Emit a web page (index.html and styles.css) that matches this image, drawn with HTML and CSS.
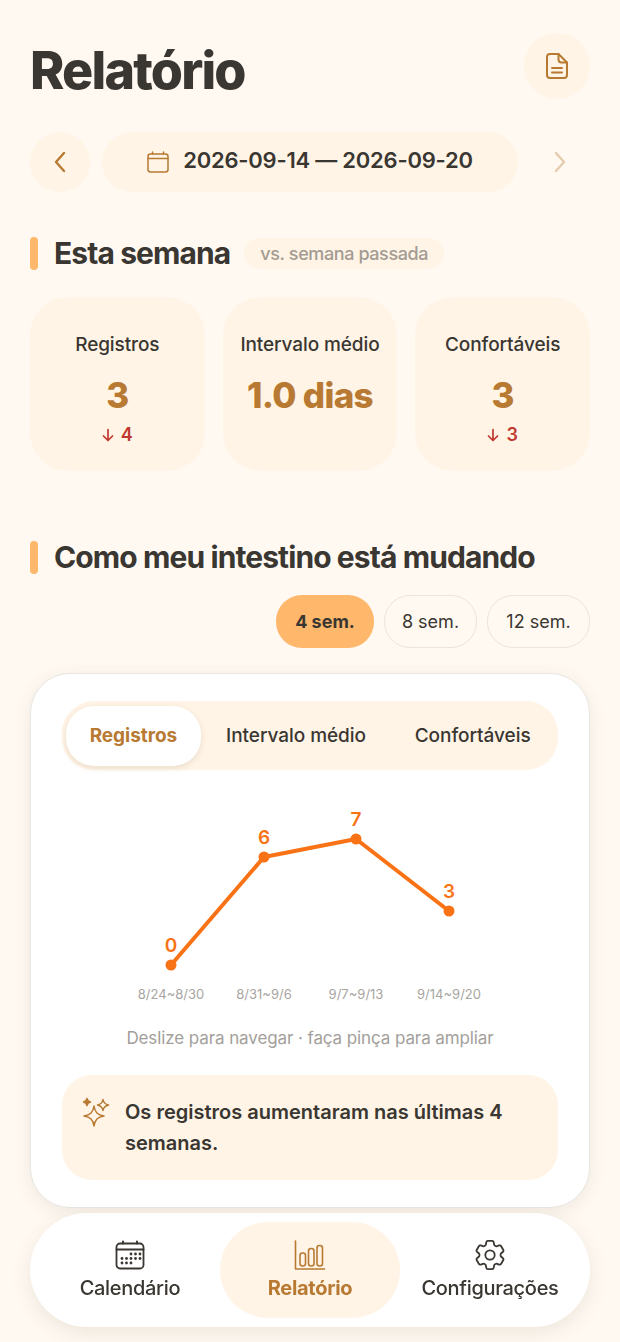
FILE: index.html
```html
<!DOCTYPE html>
<html lang="pt">
<head>
    <meta charset="UTF-8">
    <meta name="viewport" content="width=device-width, initial-scale=1.0">
    <title>Relatório</title>
    <link rel="stylesheet" href="styles.css">
</head>
<body>
    <div class="page">
        <header class="header">
            <h1>Relatório</h1>
            <button class="doc-btn">
                <svg width="24" height="28" viewBox="0 0 24 28" fill="none" stroke="#b87a33" stroke-width="2" stroke-linejoin="round" stroke-linecap="round">
                    <path d="M5 2h8.500L22 10.500V23a3 3 0 0 1-3 3H5a3 3 0 0 1-3-3V5a3 3 0 0 1 3-3z"/>
                    <path d="M13.500 2v5.500a3 3 0 0 0 3 3H22"/>
                    <path d="M7 16h10M7 20.500h10"/>
                </svg>
            </button>
        </header>

        <div class="date-row">
            <button class="nav-arrow">
                <svg width="14" height="22" viewBox="0 0 14 22" fill="none" stroke="#b87a33" stroke-width="2.400" stroke-linecap="round" stroke-linejoin="round"><path d="M11 2L3 11l8 9"/></svg>
            </button>
            <div class="date-pill">
                <svg width="22" height="22" viewBox="0 0 22 22" fill="none" stroke="#b87a33" stroke-width="1.500" stroke-linecap="round" stroke-linejoin="round">
                    <rect x="1" y="3" width="20" height="18" rx="2.500"/>
                    <path d="M1 7.500h20M5.500 1v2M16.500 1v2"/>
                </svg>
                <span>2026-09-14 — 2026-09-20</span>
            </div>
            <button class="nav-arrow disabled">
                <svg width="14" height="22" viewBox="0 0 14 22" fill="none" stroke="#b87a33" stroke-width="2.400" stroke-linecap="round" stroke-linejoin="round"><path d="M3 2l8 9-8 9"/></svg>
            </button>
        </div>

        <div class="section-head first">
            <span class="bar"></span>
            <h2>Esta semana</h2>
            <span class="badge">vs. semana passada</span>
        </div>

        <div class="stats">
            <div class="stat">
                <div class="stat-label">Registros</div>
                <div class="stat-value">3</div>
                <div class="stat-delta">
                    <svg width="12" height="14" viewBox="0 0 12 14" fill="none" stroke="#c0392f" stroke-width="1.700" stroke-linecap="round" stroke-linejoin="round"><path d="M6 1.500v11M1.500 8L6 12.500 10.500 8"/></svg>
                    4
                </div>
            </div>
            <div class="stat">
                <div class="stat-label">Intervalo médio</div>
                <div class="stat-value">1.0 dias</div>
            </div>
            <div class="stat">
                <div class="stat-label">Confortáveis</div>
                <div class="stat-value">3</div>
                <div class="stat-delta">
                    <svg width="12" height="14" viewBox="0 0 12 14" fill="none" stroke="#c0392f" stroke-width="1.700" stroke-linecap="round" stroke-linejoin="round"><path d="M6 1.500v11M1.500 8L6 12.500 10.500 8"/></svg>
                    3
                </div>
            </div>
        </div>

        <div class="section-head second">
            <span class="bar"></span>
            <h2>Como meu intestino está mudando</h2>
        </div>

        <div class="ranges">
            <button class="range active">4 sem.</button>
            <button class="range w8">8 sem.</button>
            <button class="range w12">12 sem.</button>
        </div>

        <div class="card">
            <div class="tabs">
                <button class="tab active">Registros</button>
                <button class="tab t2">Intervalo médio</button>
                <button class="tab t3">Confortáveis</button>
            </div>

            <svg class="chart" width="496" height="212" viewBox="0 0 496 212">
                <polyline points="109,164 202,56 294,38 387,110" fill="none" stroke="#f97316" stroke-width="4" stroke-linejoin="round"/>
                <circle cx="109" cy="164" r="5.500" fill="#f97316"/>
                <circle cx="202" cy="56" r="5.500" fill="#f97316"/>
                <circle cx="294" cy="38" r="5.500" fill="#f97316"/>
                <circle cx="387" cy="110" r="5.500" fill="#f97316"/>
                <text class="pt" x="109" y="151">0</text>
                <text class="pt" x="202" y="43">6</text>
                <text class="pt" x="294" y="25">7</text>
                <text class="pt" x="387" y="97">3</text>
                <text class="tick" x="109" y="198">8/24~8/30</text>
                <text class="tick" x="202" y="198">8/31~9/6</text>
                <text class="tick" x="294" y="198">9/7~9/13</text>
                <text class="tick" x="387" y="198">9/14~9/20</text>
            </svg>

            <p class="hint">Deslize para navegar · faça pinça para ampliar</p>

            <div class="insight">
                <svg width="28" height="30" viewBox="0 0 28 30" fill="none" stroke="#b87a33" stroke-width="1.500" stroke-linejoin="round">
                    <path d="M12 9c1 6.500 3.500 9 10 10-6.500 1-9 3.500-10 10-1-6.500-3.500-9-10-10 6.500-1 9-3.500 10-10z"/>
                    <path d="M21 2.500c.5 3 2 4.700 5.500 5.500-3.500.8-5 2.500-5.500 5.500-.5-3-2-4.700-5.500-5.500 3.500-.8 5-2.500 5.500-5.500z"/>
                    <path d="M5 1.500c.4 2 1.500 3.100 3.500 3.500-2 .4-3.100 1.500-3.500 3.500-.4-2-1.500-3.100-3.500-3.500 2-.4 3.100-1.500 3.500-3.500z" fill="#b87a33"/>
                </svg>
                <p>Os registros aumentaram nas últimas 4 semanas.</p>
            </div>
        </div>
    </div>

    <nav class="bottom-nav">
        <a class="nav-item">
            <svg width="30" height="30" viewBox="0 0 30 30" fill="none" stroke="#3a3631" stroke-width="1.800" stroke-linecap="round" stroke-linejoin="round">
                <rect x="1.500" y="3.500" width="27" height="25" rx="3.500"/>
                <path d="M1.500 9.500h27M8 1.500v2M22 1.500v2" stroke-width="2"/>
                <g fill="#3a3631" stroke="none">
                    <circle cx="16" cy="14" r="1.400"/><circle cx="20.500" cy="14" r="1.400"/><circle cx="25" cy="14" r="1.400"/>
                    <circle cx="7" cy="18.500" r="1.400"/><circle cx="11.500" cy="18.500" r="1.400"/><circle cx="16" cy="18.500" r="1.400"/><circle cx="20.500" cy="18.500" r="1.400"/><circle cx="25" cy="18.500" r="1.400"/>
                    <circle cx="7" cy="23" r="1.400"/><circle cx="11.500" cy="23" r="1.400"/><circle cx="16" cy="23" r="1.400"/>
                </g>
            </svg>
            <span>Calendário</span>
        </a>
        <a class="nav-item active">
            <svg width="32" height="30" viewBox="0 0 32 30" fill="none" stroke="#b87a33" stroke-width="1.600" stroke-linecap="round" stroke-linejoin="round">
                <path d="M1.500 1v28h29"/>
                <rect x="6" y="13" width="5.500" height="13" rx="2.500"/>
                <rect x="14.500" y="8.500" width="5.500" height="17.500" rx="2.500"/>
                <rect x="23" y="5.500" width="5.500" height="20.500" rx="2.500"/>
            </svg>
            <span>Relatório</span>
        </a>
        <a class="nav-item">
            <svg width="30" height="30" viewBox="2.400 2.400 19.200 19.200" fill="none" stroke="#3a3631" stroke-width="1.150" stroke-linecap="round" stroke-linejoin="round">
                <path d="M9.594 3.940c.09-.542.56-.94 1.110-.94h2.593c.55 0 1.020.398 1.110.940l.213 1.281c.063.374.313.686.645.870.074.040.147.083.220.127.325.196.720.257 1.075.124l1.217-.456a1.125 1.125 0 0 1 1.370.490l1.296 2.247a1.125 1.125 0 0 1-.260 1.431l-1.003.827c-.293.241-.438.613-.430.992a7.723 7.723 0 0 1 0 .255c-.008.378.137.750.430.991l1.004.827c.424.350.534.955.260 1.430l-1.298 2.247a1.125 1.125 0 0 1-1.369.491l-1.217-.456c-.355-.133-.750-.072-1.076.124a6.470 6.470 0 0 1-.220.128c-.331.183-.581.495-.644.869l-.213 1.281c-.090.543-.560.940-1.110.940h-2.594c-.550 0-1.019-.397-1.110-.940l-.213-1.281c-.062-.374-.312-.686-.644-.870a6.520 6.520 0 0 1-.220-.127c-.325-.196-.720-.257-1.076-.124l-1.217.456a1.125 1.125 0 0 1-1.369-.490l-1.297-2.247a1.125 1.125 0 0 1 .260-1.431l1.004-.827c.292-.240.437-.613.430-.991a6.932 6.932 0 0 1 0-.255c.007-.380-.138-.751-.430-.992l-1.004-.827a1.125 1.125 0 0 1-.260-1.430l1.297-2.247a1.125 1.125 0 0 1 1.370-.491l1.216.456c.356.133.751.072 1.076-.124.072-.044.146-.086.220-.128.332-.183.582-.495.644-.869l.214-1.280z"/>
                <circle cx="12" cy="12" r="3"/>
            </svg>
            <span>Configurações</span>
        </a>
    </nav>
</body>
</html>
```

FILE: styles.css
```css
* {
    box-sizing: border-box;
}
html, body {
    margin: 0;
    height: 100%;
}
body {
    font-family: Inter, "Liberation Sans", sans-serif;
    background-color: #fff9f2;
    color: #3a3631;
    overflow: hidden;
}
button {
    font-family: inherit;
    border: none;
    padding: 0;
    background: none;
}
h1, h2, p {
    margin: 0;
}
.page {
    padding: 33px 30px 0;
}
.header {
    display: flex;
    justify-content: space-between;
    align-items: center;
    height: 66px;
}
.header h1 {
    font-size: 52px;
    font-weight: 800;
    letter-spacing: -1.800px;
    line-height: 66px;
    margin-top: 10px;
}
.doc-btn {
    width: 66px;
    height: 66px;
    border-radius: 50%;
    background: #fff4e6;
    display: flex;
    align-items: center;
    justify-content: center;
}
.date-row {
    display: flex;
    gap: 12px;
    margin-top: 33px;
    height: 60px;
}
.nav-arrow {
    width: 60px;
    flex: none;
    border-radius: 50%;
    background: #fff4e6;
    display: flex;
    align-items: center;
    justify-content: center;
}
.nav-arrow.disabled {
    opacity: 0.35;
    background: #fff9f2;
}
.date-pill {
    flex: 1;
    border-radius: 30px;
    background: #fff4e6;
    display: flex;
    align-items: center;
    justify-content: center;
    gap: 14px;
    font-size: 22px;
    font-weight: 600;
    letter-spacing: -0.230px;
}
.date-pill span {
    margin-bottom: 5px;
}
.section-head {
    display: flex;
    align-items: center;
    gap: 16px;
    height: 33px;
}
.section-head.first {
    margin-top: 45px;
}
.section-head.second {
    margin-top: 70px;
}
.bar {
    width: 8px;
    height: 33px;
    border-radius: 4px;
    background: #ffb76b;
    flex: none;
}
.section-head h2 {
    font-size: 30px;
    font-weight: 700;
    letter-spacing: -0.900px;
    white-space: nowrap;
    margin-bottom: 2px;
}
.badge {
    margin-left: -2px;
    height: 31px;
    line-height: 31px;
    padding: 0 16px;
    border-radius: 16px;
    background: #fff4e6;
    color: #a39b92;
    font-size: 18px;
    font-weight: 500;
    letter-spacing: -0.400px;
}
.stats {
    display: grid;
    grid-template-columns: repeat(3, 1fr);
    gap: 18px;
    margin-top: 27px;
}
.stat {
    height: 174px;
    border-radius: 38px;
    background: #fff4e6;
    text-align: center;
    padding-top: 36px;
}
.stat-label {
    font-size: 19px;
    font-weight: 500;
    line-height: 24px;
    letter-spacing: -0.100px;
}
.stat-value {
    font-size: 35px;
    font-weight: 800;
    color: #b87a33;
    line-height: 42px;
    letter-spacing: -0.700px;
    margin-top: 17px;
}
.stat-delta {
    font-size: 18px;
    font-weight: 600;
    color: #c0392f;
    line-height: 22px;
    margin-top: 8px;
    display: flex;
    align-items: center;
    justify-content: center;
    gap: 7px;
}
.ranges {
    display: flex;
    justify-content: flex-end;
    gap: 10px;
    margin-top: 21px;
}
.range {
    height: 53px;
    border-radius: 26px;
    border: 1.500px solid #e9e5df;
    font-size: 18px;
    color: #3a3631;
}
.range.active {
    width: 98px;
    border: none;
    background: #ffb76b;
    font-weight: 700;
}
.range.w8 {
    width: 93px;
}
.range.w12 {
    width: 103px;
}
.card {
    margin-top: 25px;
    height: 535px;
    padding: 27px 31px 0;
    background: #fff;
    border: 1px solid #e9e6e1;
    border-radius: 40px;
    box-shadow: 0 4px 18px rgba(90, 70, 40, 0.09);
}
.tabs {
    display: flex;
    align-items: center;
    height: 69px;
    padding: 0 4px;
    border-radius: 32px;
    background: #fff4e6;
}
.tab {
    height: 60px;
    font-size: 19px;
    font-weight: 500;
    letter-spacing: -0.050px;
    color: #3a3631;
}
.tab.active {
    width: 135px;
    border-radius: 28px;
    background: #fff;
    color: #b87a33;
    font-weight: 700;
    box-shadow: 0 2px 6px rgba(120, 80, 30, 0.14);
}
.tab.t2 {
    width: 191px;
}
.tab.t3 {
    width: 163px;
}
.chart {
    display: block;
    margin-top: 31px;
}
.pt {
    font-family: Inter, sans-serif;
    font-size: 19px;
    font-weight: 600;
    fill: #f97316;
    text-anchor: middle;
}
.tick {
    font-family: Inter, sans-serif;
    font-size: 13px;
    fill: #a8a5a0;
    text-anchor: middle;
}
.hint {
    text-align: center;
    font-size: 17px;
    line-height: 24px;
    letter-spacing: -0.100px;
    color: #a3a09b;
    margin-top: 13px;
}
.insight {
    display: flex;
    gap: 15px;
    margin-top: 25px;
    height: 105px;
    padding: 22px 20px 0;
    border-radius: 30px;
    background: #fff4e6;
}
.insight p {
    font-size: 20px;
    font-weight: 600;
    line-height: 31px;
    flex: 1;
}
.bottom-nav {
    position: fixed;
    left: 30px;
    right: 30px;
    bottom: 15px;
    height: 114px;
    padding: 0 10px;
    display: grid;
    grid-template-columns: repeat(3, 180px);
    align-items: center;
    background: #fff;
    border-radius: 57px;
    box-shadow: 0 6px 20px rgba(90, 70, 40, 0.1);
}
.nav-item {
    height: 96px;
    display: flex;
    flex-direction: column;
    align-items: center;
    justify-content: flex-end;
    gap: 6px;
    padding-bottom: 18px;
    font-size: 20px;
    font-weight: 500;
    letter-spacing: -0.300px;
    border-radius: 48px;
    white-space: nowrap;
}
.nav-item.active {
    background: #fff4e6;
    color: #b87a33;
    font-weight: 700;
}
```
